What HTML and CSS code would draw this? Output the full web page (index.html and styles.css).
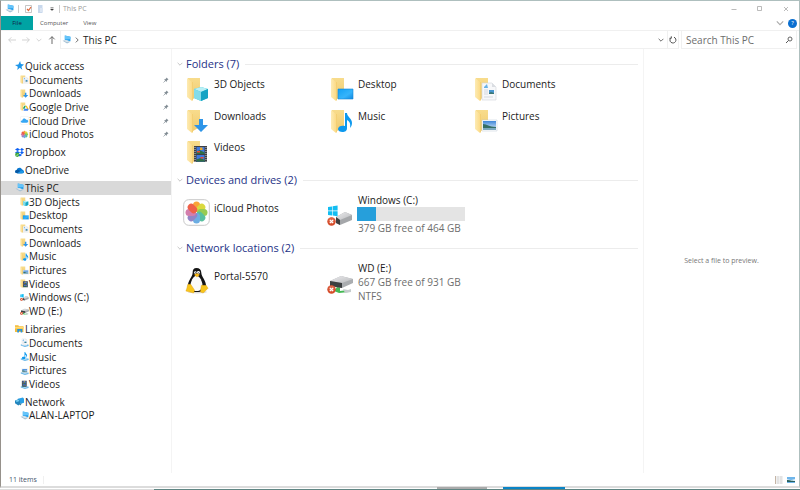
FILE: index.html
```
<!DOCTYPE html>
<html lang="en">
<head>
<meta charset="utf-8">
<title>This PC</title>
<link rel="stylesheet" href="styles.css">
</head>
<body>
<svg class="defs" aria-hidden="true">
  <defs>
    <linearGradient id="gFold" x1="0" x2="1"><stop offset="0" stop-color="#fdebb4"/><stop offset="1" stop-color="#fcdb87"/></linearGradient>
    <linearGradient id="gBack" x1="0" x2="0" y2="1"><stop offset="0" stop-color="#f8dc8c"/><stop offset="1" stop-color="#f0cb70"/></linearGradient>
    <linearGradient id="gBlue" x1="0" x2="1" y2="1"><stop offset="0" stop-color="#12a0f5"/><stop offset=".6" stop-color="#35b4fb"/><stop offset="1" stop-color="#1187e0"/></linearGradient>
    <linearGradient id="gSky" x1="0" x2="0" y2="1"><stop offset="0" stop-color="#3e86d8"/><stop offset="1" stop-color="#e2f1fb"/></linearGradient>
    <linearGradient id="gDisk" x1="0" x2="1" y2="1"><stop offset="0" stop-color="#ececee"/><stop offset="1" stop-color="#b9babd"/></linearGradient>
    <symbol id="folder" viewBox="0 0 24 24"><path d="M2 1h12v17L7 22 2 19z" fill="url(#gBack)"/><path d="M1 1l5 4v19l-5-4z" fill="url(#gFold)"/><path d="M6 5l1 0v18l-1 1z" fill="#f3cf74"/></symbol>
    <symbol id="cube" viewBox="0 0 24 24"><path d="M15 10l7 2v9l-7 3-7-3v-9z" fill="#35c1d8"/><path d="M15 10l7 2-7 3-7-3z" fill="#b9f0f5"/><path d="M8 12l7 3v9l-7-3z" fill="#83dce8"/><path d="M15 15l7-3v9l-7 3z" fill="#16a4c4"/></symbol>
    <symbol id="screen" viewBox="0 0 24 24"><path d="M8 12h15v10H8z" fill="url(#gBlue)" stroke="#1686d6" stroke-width=".6"/></symbol>
    <symbol id="doc" viewBox="0 0 24 24"><path d="M8 6h10l4 4v13H8z" fill="#f7f8fa" stroke="#d2d5da" stroke-width=".6"/><path d="M18 6v4h4z" fill="#dadde2"/><path d="M10 10l3-3 1 4h-4z" fill="#69b2e6"/><path d="M10 13h4M10 15h4M10 17h4M10 20h9" stroke="#c4cbd3" stroke-width=".7"/><path d="M15 13h5v4h-5z" fill="#4795cf"/><path d="M15 16l2-1 3 1v1h-5z" fill="#3c7773"/></symbol>
    <symbol id="down" viewBox="0 0 24 24"><path d="M13 10h4v6h5l-7 7-7-7h5z" fill="#2e95e8"/></symbol>
    <symbol id="note" viewBox="0 0 24 24"><path d="M15 4h2c0 4 5 5 5 10 0 2-1 4-2 5 1-5-1-7-3-8v8c0 3-2 4-4.500 4S8 22 8 20c0-3 4-4 7-3z" fill="#0d99ee"/></symbol>
    <symbol id="picture" viewBox="0 0 24 24"><path d="M8 11h15v11H8z" fill="#fff" stroke="#bcc9d4" stroke-width=".5"/><path d="M9 12h13v9H9z" fill="url(#gSky)"/><path d="M9 15c4 0 6 3 13 3v1H9z" fill="#356f65"/><path d="M9 19h13v2H9z" fill="#7ba8bf"/></symbol>
    <symbol id="film" viewBox="0 0 24 24"><path d="M8 6h13v16H8z" fill="#3e4044"/><path d="M9 7v15M20 7v15" stroke="#d2d2d2" stroke-width="1" stroke-dasharray="1 1"/><path d="M10.500 7h8v7h-8zM10.500 15h8v6.500h-8z" fill="#3f78de"/><path d="M10.500 12l3-2 5 2.500v1.500h-8zM10.500 19.500l4-1.500 4 2v1.500h-8z" fill="#2f6f45"/><path d="M14 7.500h2.500v2.500H14z" fill="#f0a825"/><path d="M11 11h3v1.500h-3zM14.500 17h3v1.500h-3z" fill="#e64b36"/></symbol>
    <symbol id="pc" viewBox="0 0 16 16"><path d="M5 1l10 2v8L5 9z" fill="#28a2ee"/><path d="M5 1l10 2v4L5 8z" fill="#66c4f9"/><path d="M1 10l6-1 8 3-6 3z" fill="#a5bfd2"/><path d="M3 10l4-1 6 2.500-4 1.500z" fill="#dae6ee"/></symbol>
    <symbol id="error" viewBox="0 0 10 10"><circle cx="5" cy="5" r="4.700" fill="#d54c2a"/><circle cx="5" cy="4" r="3.400" fill="#e5765a" opacity=".6"/><path d="M3.200 3.200l3.600 3.600M6.800 3.200L3.200 6.800" stroke="#fff" stroke-width="1.500"/></symbol>
    <symbol id="diskC" viewBox="0 0 26 22"><path d="M9 12l9-5 7 3v5l-12 5-4-2z" fill="#a5a7aa"/><path d="M9 12l9-5 7 3-12 5z" fill="url(#gDisk)"/><path d="M9 12l4 3v5l-4-2z" fill="#3b3f40"/><path d="M1 2l4-.6v4.200H1zM5.600 1.300l5-.7v5h-5zM1 6.200h4v4.200L1 10zM5.600 6.200h5v5l-5-.7z" fill="#12bdf2"/><use href="#error" x="0" y="12" width="9" height="9"/></symbol>
    <symbol id="diskE" viewBox="0 0 26 22"><path d="M10 14l3-1v5l8-1 1 2-10 1-5-2z" fill="#45b955"/><path d="M16 16l5 1 3-1v3l-6 1z" fill="#c5cccd"/><path d="M3 8l11-5 12 3v4L15 15 3 13z" fill="#aaadb0"/><path d="M3 8l11-5 12 3-11 4z" fill="url(#gDisk)"/><path d="M3 8l12 2v5L3 13z" fill="#3b3f40"/><use href="#error" x="0" y="12" width="9" height="9"/></symbol>
    <symbol id="petals" viewBox="0 0 27 27"><g opacity=".9"><rect x="10" y="2.500" width="7" height="10.500" rx="3.500" fill="#f99a22"/><rect x="10" y="2.500" width="7" height="10.500" rx="3.500" fill="#d6d52a" transform="rotate(45 13.500 13.500)"/><rect x="10" y="2.500" width="7" height="10.500" rx="3.500" fill="#8cc63f" transform="rotate(90 13.500 13.500)"/><rect x="10" y="2.500" width="7" height="10.500" rx="3.500" fill="#45b995" transform="rotate(135 13.500 13.500)"/><rect x="10" y="2.500" width="7" height="10.500" rx="3.500" fill="#5da5df" transform="rotate(180 13.500 13.500)"/><rect x="10" y="2.500" width="7" height="10.500" rx="3.500" fill="#8877c0" transform="rotate(225 13.500 13.500)"/><rect x="10" y="2.500" width="7" height="10.500" rx="3.500" fill="#cf6fa4" transform="rotate(270 13.500 13.500)"/><rect x="10" y="2.500" width="7" height="10.500" rx="3.500" fill="#ee4f35" transform="rotate(315 13.500 13.500)"/></g></symbol>
    <symbol id="photos" viewBox="0 0 27 27"><rect x=".7" y=".7" width="25.600" height="25.600" rx="5" fill="#fff" stroke="#c8c8c8"/><use href="#petals" width="27" height="27"/></symbol>
    <symbol id="tux" viewBox="0 0 24 28"><ellipse cx="13" cy="26" rx="10" ry="1.500" fill="#ddd"/><path d="M12 1c3 0 5 2 5 5 0 4 5 8 5 14 0 4-4 6-10 6S3 24 3 20C3 14 8 10 8 6c0-3 1-5 4-5z" fill="#151515"/><path d="M12 9c3 0 5 4 6 8 1 5-2 8-6 8s-7-3-6-8c1-4 3-8 6-8z" fill="#fafafa"/><circle cx="10.800" cy="5.600" r="1.300" fill="#fff"/><circle cx="14" cy="5.600" r="1.500" fill="#fff"/><circle cx="11" cy="5.700" r=".5"/><circle cx="13.800" cy="5.700" r=".5"/><path d="M9.500 8l3-1.500 3 1.500-3 2.500z" fill="#f6b617"/><path d="M3 18l3 0 4 6-1 3-8-2 1-3zM17 19l5 0 2 3-5 5-3-1z" fill="#f8c51c" stroke="#dc9b10" stroke-width=".4"/></symbol>
    <symbol id="star" viewBox="0 0 16 16"><path d="M9 0l1.500 5.500L16 6l-4.500 4L13 15.500 8.500 12 4 16l1-6-5-3 6-1z" fill="#1e96e9"/></symbol>
    <symbol id="drop" viewBox="0 0 16 16"><path d="M4.500 0L9 2.700 4.500 5.500 0 2.700zM12 0l4 2.700-4 2.800-3-2.800zM4.500 5.500L9 8.200 4.500 11 0 8.200zM12 5.500l4 2.700-4 2.800-3-2.800zM8.500 10l4 2.500-4 2.500-3-2.500z" fill="#0c61f4"/><circle cx="4" cy="12" r="3.800" fill="#3ba63b"/><path d="M2 12l1.500 1.500L6 10.500" fill="none" stroke="#fff"/></symbol>
    <symbol id="cloud" viewBox="0 0 16 10"><path d="M4 10C-1 10-.5 4 3 4c1-5 8-5 9.500-1C17 4 17 10 13 10z" fill="#0a78d1"/><path d="M3 4c3-1 5 1 10 5l-1 1H4C-1 10-.5 4 3 4z" fill="#0759a4"/><path d="M4 10l7-5c4-1 6 5 2 5z" fill="#1d98e8"/></symbol>
    <symbol id="icloud" viewBox="0 0 16 16"><rect x=".5" y=".5" width="15" height="15" rx="3" fill="#fff" stroke="#eee"/><path d="M4 12c-4-.5-3-4 0-4 1-5 6-4 7-1 4-1 5 5 1 5z" fill="#36a7f4"/></symbol>
    <symbol id="lib" viewBox="0 0 16 14"><path d="M0 1h6l1 2h8v10H0z" fill="#f3bb3a"/><path d="M0 4h16v3H0z" fill="#ffdb78"/><path d="M4 8h9v6H10v-3H7v3H4z" fill="#2594df"/></symbol>
    <symbol id="net" viewBox="0 0 16 16"><path d="M5 3l9-2 2 2v7l-6 2-5-3z" fill="#2aa1e7"/><path d="M0 6l6-2 3 2v7l-3 2-6-4z" fill="#2386be"/><path d="M1 6l5-1 2 2-5 2z" fill="#79d0f3"/><path d="M7 12l5-1-2 4z" fill="#3d7f9f"/></symbol>
    <symbol id="tray" viewBox="0 0 24 24"><path d="M2 17l10-3 11 4v3l-10 3-11-4z" fill="#69b7e8"/><path d="M2 17l10-3 11 4-10 3z" fill="#b4ddf5"/></symbol>
    <symbol id="pin" viewBox="0 0 12 12"><path d="M7 1l4 4-1.500.5-2 2L7 10 2 5l2.500-.5 2-2z" fill="#7f8a92"/><path d="M4 8L1 11" stroke="#7f8a92" stroke-width="1.300"/></symbol>
    <symbol id="g" viewBox="0 0 24 24"><path d="M9 9h12v14H9z" fill="#fff"/><path d="M12 10h4l-5 10-3-4z" fill="#1da462"/><path d="M15 10h3l5 9h-4z" fill="#fbbc05"/><path d="M12 18h11l-2 5H9z" fill="#4285f4"/></symbol>
    <symbol id="chev" viewBox="0 0 10 10"><path d="M1 3l4 4 4-4" fill="none" stroke="currentColor" stroke-width="1.400"/></symbol>
    <symbol id="arrow" viewBox="0 0 12 12"><path d="M12 6H1M5 2L1 6l4 4" fill="none" stroke="currentColor" stroke-width="1.300"/></symbol>
  </defs>
</svg>
<div class="window">
  <header class="titlebar">
    <svg class="ico-m"><use href="#pc"/></svg>
    <span class="sep"></span>
    <button class="quick" aria-label="Properties"><svg class="ico-s" viewBox="0 0 8 8"><path d="M.5.5h6v7h-6z" fill="#fff" stroke="#b8b8b8" stroke-width=".8"/><path d="M2 4l1.500 1.500L6 2" fill="none" stroke="#e0683c" stroke-width="1.200"/></svg></button>
    <button class="quick" aria-label="New folder"><svg class="ico-s" viewBox="0 0 8 8"><path d="M1 0h4.500v8H1z" fill="#c8d8ec"/><path d="M3 3h3v4H3z" fill="#dce6f3"/></svg></button>
    <button class="quick" aria-label="Customize toolbar"><svg class="ico-xs" viewBox="0 0 8 8"><path d="M2 2h4M2 4h4L4 6z" fill="#333" stroke="#333" stroke-width=".6"/></svg></button>
    <span class="sep"></span>
    <h1 class="caption">This PC</h1>
    <div class="winbuttons">
      <button aria-label="Minimize"><svg class="ico-s" viewBox="0 0 8 8"><path d="M1.500 4.500h5" stroke="#aaa" stroke-width=".8"/></svg></button>
      <button aria-label="Maximize"><svg class="ico-s" viewBox="0 0 8 8"><path d="M1.500 1.500h4v4h-4z" fill="none" stroke="#aaa" stroke-width=".8"/></svg></button>
      <button aria-label="Close"><svg class="ico-s" viewBox="0 0 8 8"><path d="M2 2l4 4M6 2L2 6" stroke="#aaa" stroke-width=".8"/></svg></button>
    </div>
  </header>
  <div class="ribbon">
    <button class="tab file">File</button>
    <button class="tab computer">Computer</button>
    <button class="tab">View</button>
    <div class="ribbon-end">
      <button class="grey" aria-label="Expand ribbon"><svg class="ico-s"><use href="#chev"/></svg></button>
      <button class="help" aria-label="Help">?</button>
    </div>
  </div>
  <div class="toolbar">
    <div class="history">
      <button class="off" aria-label="Back"><svg class="ico-s"><use href="#arrow"/></svg></button>
      <button class="off" aria-label="Forward"><svg class="ico-s flip"><use href="#arrow"/></svg></button>
      <button class="off" aria-label="Recent"><svg class="ico-xs"><use href="#chev"/></svg></button>
      <button aria-label="Up"><svg class="ico-s up"><use href="#arrow"/></svg></button>
    </div>
    <div class="address">
      <svg class="ico-m"><use href="#pc"/></svg>
      <svg class="ico-xs right"><use href="#chev"/></svg>
      <span class="crumb">This PC</span>
      <button class="drop" aria-label="Previous locations"><svg class="ico-xs"><use href="#chev"/></svg></button>
      <button class="refresh" aria-label="Refresh"><svg class="ico-s" viewBox="0 0 8 8"><path d="M5 1.200A3 3 0 1 1 2 1.700M2.300.3v2H.5" fill="none" stroke="#555" stroke-width="1"/></svg></button>
    </div>
    <div class="search">
      <input type="text" aria-label="Search This PC" placeholder="Search This PC">
      <button aria-label="Search"><svg class="ico-s" viewBox="0 0 8 8"><circle cx="5" cy="3" r="2" fill="none" stroke="#555" stroke-width=".9"/><path d="M3.500 4.500L1 7" stroke="#555"/></svg></button>
    </div>
  </div>
  <div class="content">
    <nav class="tree">
      <div class="branch rows6">
        <a class="root" href="#"><svg class="ico-m"><use href="#star"/></svg>Quick access</a>
        <a href="#"><svg class="ico-m"><use href="#folder"/><use href="#doc"/></svg>Documents<svg class="pin"><use href="#pin"/></svg></a>
        <a href="#"><svg class="ico-m"><use href="#folder"/><use href="#down"/></svg>Downloads<svg class="pin"><use href="#pin"/></svg></a>
        <a href="#"><svg class="ico-m"><use href="#folder"/><use href="#g"/></svg>Google Drive<svg class="pin"><use href="#pin"/></svg></a>
        <a href="#"><svg class="ico-m"><use href="#icloud"/></svg>iCloud Drive<svg class="pin"><use href="#pin"/></svg></a>
        <a href="#"><svg class="ico-m"><use href="#petals"/></svg>iCloud Photos<svg class="pin"><use href="#pin"/></svg></a>
      </div>
      <div class="branch rows1"><a class="root" href="#"><svg class="ico-m"><use href="#drop"/></svg>Dropbox</a></div>
      <div class="branch rows1"><a class="root" href="#"><svg class="ico-m"><use href="#cloud"/></svg>OneDrive</a></div>
      <div class="branch rows10">
        <a class="root selected" href="#" aria-current="page"><svg class="ico-m"><use href="#pc"/></svg>This PC</a>
        <a href="#"><svg class="ico-m"><use href="#folder"/><use href="#cube"/></svg>3D Objects</a>
        <a href="#"><svg class="ico-m"><use href="#folder"/><use href="#screen"/></svg>Desktop</a>
        <a href="#"><svg class="ico-m"><use href="#folder"/><use href="#doc"/></svg>Documents</a>
        <a href="#"><svg class="ico-m"><use href="#folder"/><use href="#down"/></svg>Downloads</a>
        <a href="#"><svg class="ico-m"><use href="#folder"/><use href="#note"/></svg>Music</a>
        <a href="#"><svg class="ico-m"><use href="#folder"/><use href="#picture"/></svg>Pictures</a>
        <a href="#"><svg class="ico-m"><use href="#folder"/><use href="#film"/></svg>Videos</a>
        <a href="#"><svg class="ico-m"><use href="#diskC"/></svg>Windows (C:)</a>
        <a href="#"><svg class="ico-m"><use href="#diskE"/></svg>WD (E:)</a>
      </div>
      <div class="branch rows5">
        <a class="root" href="#"><svg class="ico-m"><use href="#lib"/></svg>Libraries</a>
        <a href="#"><svg class="ico-m" viewBox="0 0 24 24"><use href="#tray"/><use href="#doc" x="-3" y="-4" width="24" height="24"/></svg>Documents</a>
        <a href="#"><svg class="ico-m" viewBox="0 0 24 24"><use href="#tray"/><use href="#note" x="-3" y="-4" width="24" height="24"/></svg>Music</a>
        <a href="#"><svg class="ico-m" viewBox="0 0 24 24"><use href="#tray"/><use href="#picture" x="-3" y="-4" width="24" height="24"/></svg>Pictures</a>
        <a href="#"><svg class="ico-m" viewBox="0 0 24 24"><use href="#tray"/><use href="#film" x="-3" y="-4" width="24" height="24"/></svg>Videos</a>
      </div>
      <div class="branch rows2">
        <a class="root" href="#"><svg class="ico-m"><use href="#net"/></svg>Network</a>
        <a href="#"><svg class="ico-m"><use href="#pc"/></svg>ALAN-LAPTOP</a>
      </div>
    </nav>
    <main class="files">
      <section>
        <h2><svg class="ico-xs"><use href="#chev"/></svg>Folders (7)</h2>
        <div class="grid folders">
          <a class="item" href="#"><svg class="ico-l"><use href="#folder"/><use href="#cube"/></svg><span>3D Objects</span></a>
          <a class="item" href="#"><svg class="ico-l"><use href="#folder"/><use href="#screen"/></svg><span>Desktop</span></a>
          <a class="item" href="#"><svg class="ico-l"><use href="#folder"/><use href="#doc"/></svg><span>Documents</span></a>
          <a class="item" href="#"><svg class="ico-l"><use href="#folder"/><use href="#down"/></svg><span>Downloads</span></a>
          <a class="item" href="#"><svg class="ico-l"><use href="#folder"/><use href="#note"/></svg><span>Music</span></a>
          <a class="item" href="#"><svg class="ico-l"><use href="#folder"/><use href="#picture"/></svg><span>Pictures</span></a>
          <a class="item" href="#"><svg class="ico-l"><use href="#folder"/><use href="#film"/></svg><span>Videos</span></a>
        </div>
      </section>
      <section>
        <h2><svg class="ico-xs"><use href="#chev"/></svg>Devices and drives (2)</h2>
        <div class="grid drives">
          <a class="item device" href="#"><svg class="ico-xl"><use href="#photos"/></svg><span>iCloud Photos</span></a>
          <a class="item" href="#"><svg class="ico-disk"><use href="#diskC"/></svg><span class="details"><span>Windows (C:)</span><span class="meter"><span class="used"></span></span><span class="muted">379 GB free of 464 GB</span></span></a>
        </div>
      </section>
      <section>
        <h2><svg class="ico-xs"><use href="#chev"/></svg>Network locations (2)</h2>
        <div class="grid drives">
          <a class="item device" href="#"><svg class="ico-xl"><use href="#tux"/></svg><span>Portal-5570</span></a>
          <a class="item" href="#"><svg class="ico-disk"><use href="#diskE"/></svg><span class="details"><span>WD (E:)</span><span class="muted">667 GB free of 931 GB</span><span class="muted">NTFS</span></span></a>
        </div>
      </section>
    </main>
    <aside class="preview">Select a file to preview.</aside>
  </div>
  <footer class="status">
    <span class="count">11 items</span>
    <div class="views">
      <button aria-label="Details view"><svg class="ico-s" viewBox="0 0 8 8"><path d="M0 0h8v8H0z" fill="#f0f0f0"/><path d="M.5 0v8" stroke="#c5b5a5"/><path d="M2 1h2M5 1h2M2 3h2M5 3h2M2 5h2M5 5h2M2 7h2M5 7h2" stroke="#ccc" stroke-width=".7"/></svg></button>
      <button aria-label="Large icons view"><svg class="ico-s" viewBox="0 0 8 8"><path d="M0 1h8v6H0z" fill="#6fb5ea"/><path d="M0 3l4 1 4-1v2H0z" fill="#d7edf8"/><path d="M0 4c3 0 4 1 8 1v1H0z" fill="#28605d"/></svg></button>
    </div>
  </footer>
</div>
<div class="taskbar"><span class="task"></span><span class="task live"></span></div>
</body>
</html>
```
FILE: styles.css
```
* { box-sizing: border-box; }
html, body { height: 100%; margin: 0; }
body {
  display: flex;
  flex-direction: column;
  font: 10px/14px "Open Sans", "Noto Sans", sans-serif;
  color: #1b1b1b;
  background: #fff;
}
button { border: 0; padding: 0; background: none; font: inherit; color: inherit; display: flex; align-items: center; justify-content: center; }
a { color: inherit; text-decoration: none; }
svg { flex: none; display: block; }
.defs { position: absolute; width: 0; height: 0; }
.ico-xs { width: 6px; height: 6px; }
.ico-s { width: 8px; height: 8px; }
.ico-m { width: 9px; height: 9px; }
.ico-l { width: 24px; height: 24px; }
.ico-xl { width: 27px; height: 27px; }
.ico-disk { width: 26px; height: 22px; }
.flip { transform: rotate(180deg); }
.up { transform: rotate(90deg); }
.right { transform: rotate(-90deg); }

.window {
  flex: 1;
  min-height: 0;
  display: flex;
  flex-direction: column;
  border: 1px solid #aebfbe;
  border-left-color: #96918b;
  border-bottom: 2px solid #dcdcdc;
}
.titlebar { display: flex; align-items: center; height: 15px; padding-left: 4px; gap: 4px; }
.sep { width: 1px; height: 8px; background: #ccc; }
.titlebar .sep + .quick { margin-left: 2px; }
.caption { margin: 0 0 0 -1px; font-size: 7px; font-weight: 400; color: #999; }
.winbuttons { display: flex; margin-left: auto; }
.winbuttons button { width: 26px; height: 14px; }

.ribbon { display: flex; height: 14px; font-size: 6px; color: #555; }
.tab { padding: 0 8px; }
.file { width: 32px; background: #00a3a3; color: #124; }
.computer { padding: 0 7px; }
.ribbon-end { display: flex; align-items: center; gap: 4px; margin-left: auto; padding-right: 2px; }
.grey { color: #aaa; }
.help { width: 9px; height: 9px; border-radius: 50%; background: #0a6fd0; color: #fff; line-height: 9px; }

.toolbar { display: flex; height: 19px; border-top: 1px solid #f0f0f0; color: #555; }
.history { display: flex; align-items: center; gap: 6px; width: 59px; padding-left: 7px; }
.off { color: #ccc; }
.address { flex: 1; display: flex; align-items: center; gap: 3px; padding-left: 1px; border: 1px solid #f0f0f0; border-top: 0; }
.crumb { color: #1b1b1b; }
.drop { margin-left: auto; }
.refresh { align-self: stretch; width: 11px; border-left: 1px solid #f0f0f0; }
.search { display: flex; align-items: center; width: 116px; margin: 0 2px; padding: 0 3px; border: 1px solid #f0f0f0; border-top: 0; }
.search input { flex: 1; min-width: 0; border: 0; padding: 0 0 0 1px; font: inherit; background: none; outline: 0; }
.search input::placeholder { color: #6d6d6d; opacity: 1; }

.content { flex: 1; min-height: 0; display: flex; }
.tree { width: 171px; padding-top: 10px; border-right: 1px solid #f4f4f4; display: flex; flex-direction: column; gap: 4px; }
.branch { display: flex; flex-direction: column; }
.branch a { flex: 1; min-height: 0; display: flex; align-items: center; padding-left: 19px; line-height: 14px; }
.branch a.root { padding-left: 14px; gap: 1px; }
.branch a.selected { background: #d9d9d9; }
.pin { width: 6px; height: 6px; margin: 0 2px 0 auto; }
.rows1 { height: 14px; }
.rows2 { height: 27px; }
.rows5 { height: 69px; }
.rows6 { height: 82px; }
.rows10 { height: 137px; }

.files { flex: 1; padding: 7px 5px 0 5px; }
h2 { display: flex; align-items: center; gap: 3px; margin: 0; font-size: 11px; line-height: 16px; font-weight: 400; color: #1e3287; }
h2 svg { color: #bbb; }
h2::after { content: ""; flex: 1; height: 1px; margin-left: 3px; background: #ececec; }
.grid { display: grid; grid-template-columns: repeat(3, 144px); padding-left: 9px; }
.folders { height: 100px; padding-top: 5px; grid-template-rows: repeat(3, 1fr); }
.drives { height: 52px; padding-top: 5px; }
.item { display: flex; align-items: flex-start; }
.item .ico-l { margin-right: 4px; }
.item.device .ico-xl { margin: 6px 4px 0 -3px; }
.item.device > span { padding-top: 8px; }
.item .ico-disk { margin: 12px 4px 0 -3px; }
.details { display: flex; flex-direction: column; }
.details > span { padding-left: 1px; }
.details > .meter { width: 108px; height: 14px; padding: 0; background: #e4e4e4; }
.used { display: block; width: 18%; height: 100%; background: #269fdb; }
.muted { color: #6d6d6d; }

.preview { width: 156px; border-left: 1px solid #f4f4f4; display: flex; align-items: center; justify-content: center; font-size: 7px; color: #777; }
.status { display: flex; align-items: center; justify-content: space-between; height: 13px; padding: 0 4px 0 8px; font-size: 7px; color: #44546a; }
.count { border-right: 1px solid #f0f0f0; padding-right: 6px; line-height: 8px; }
.views { display: flex; gap: 4px; }
.taskbar { display: flex; height: 2px; padding-left: 437px; background: linear-gradient(90deg, #ddd 154px, #5f8583 154px) bottom / 100% 1px no-repeat; }
.task { width: 50px; height: 2px; margin: -1px 16px 0 0; background: #aaa; }
.live { width: 62px; background: #0a84c6; }
```
